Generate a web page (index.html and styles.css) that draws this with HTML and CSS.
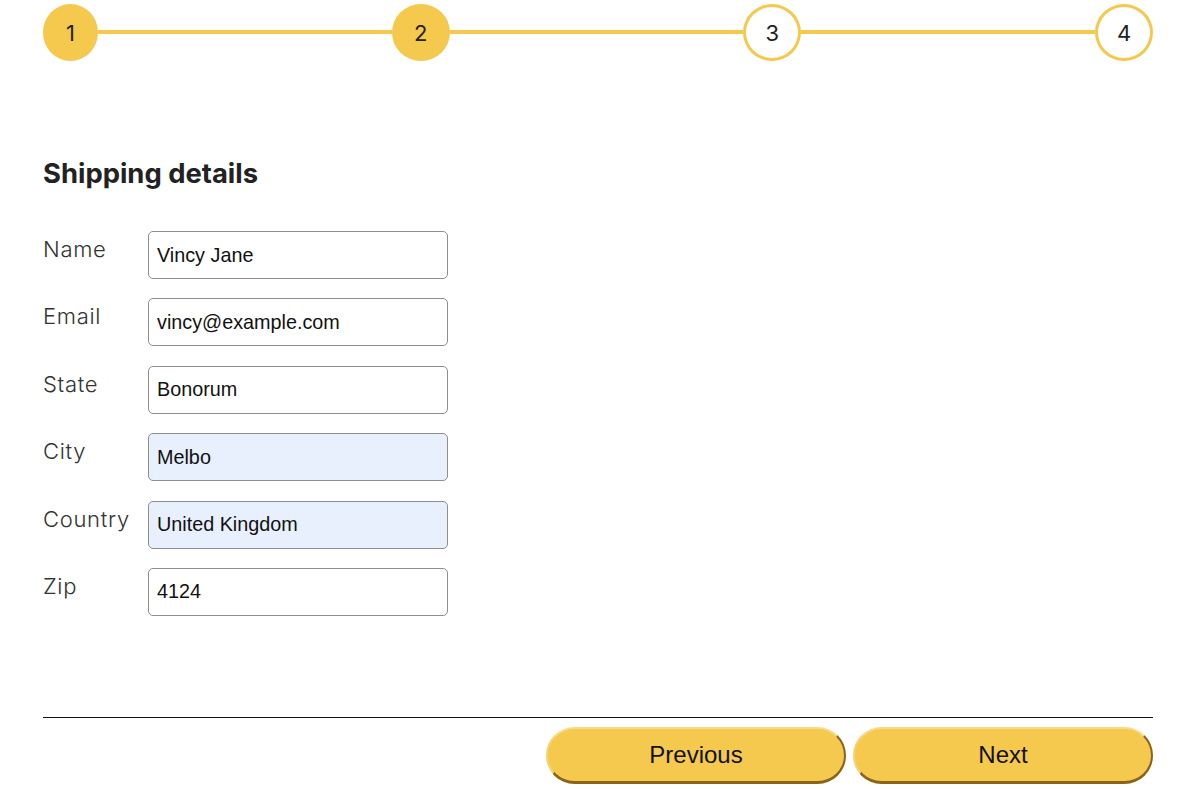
FILE: index.html
```html
<!DOCTYPE html>
<html lang="en">
<head>
<meta charset="utf-8">
<title>Shipping details</title>
<link rel="stylesheet" href="styles.css">
</head>
<body>
<div class="wizard">
  <div class="stepper">
    <div class="step step-done step-first">1</div>
    <div class="step-line"></div>
    <div class="step step-done">2</div>
    <div class="step-line"></div>
    <div class="step step-todo">3</div>
    <div class="step-line"></div>
    <div class="step step-todo">4</div>
  </div>

  <h2 class="title">Shipping details</h2>

  <form class="form">
    <div class="row">
      <label class="label" for="name">Name</label>
      <input class="field" id="name" type="text" value="Vincy Jane">
    </div>
    <div class="row">
      <label class="label" for="email">Email</label>
      <input class="field" id="email" type="text" value="vincy@example.com">
    </div>
    <div class="row">
      <label class="label" for="state">State</label>
      <input class="field" id="state" type="text" value="Bonorum">
    </div>
    <div class="row">
      <label class="label" for="city">City</label>
      <input class="field field-filled" id="city" type="text" value="Melbo">
    </div>
    <div class="row">
      <label class="label" for="country">Country</label>
      <input class="field field-filled" id="country" type="text" value="United Kingdom">
    </div>
    <div class="row">
      <label class="label" for="zip">Zip</label>
      <input class="field" id="zip" type="text" value="4124">
    </div>
  </form>

  <div class="footer">
    <button class="btn" type="button">Previous</button>
    <button class="btn" type="button">Next</button>
  </div>
</div>
</body>
</html>
```

FILE: styles.css
```css
html, body {
  margin: 0;
  padding: 0;
  background: #ffffff;
}

body {
  font-family: Inter, "Noto Sans", sans-serif;
  color: #222222;
}

.wizard {
  width: 1110px;
  padding: 4px 0 0 43px;
}

.stepper {
  display: flex;
  align-items: center;
}

.step {
  box-sizing: border-box;
  width: 58px;
  height: 57px;
  border-radius: 50%;
  display: flex;
  align-items: center;
  justify-content: center;
  font-size: 22px;
  color: #222222;
  flex: none;
}

.step-first {
  width: 55px;
}

.step-done {
  background: #f5c84e;
}

.step-todo {
  background: #ffffff;
  border: 3px solid #f5c84e;
}

.step-line {
  flex: 1;
  height: 4px;
  background: #f5c84e;
  margin-top: -2px;
}

.title {
  margin: 97px 0 0 0;
  font-size: 27.4px;
  font-weight: 700;
  line-height: 31px;
  color: #222222;
}

.form {
  margin-top: 42px;
  display: flex;
  flex-direction: column;
  gap: 19.4px;
}

.row {
  display: flex;
  align-items: flex-start;
}

.label {
  width: 105px;
  flex: none;
  margin-top: 5px;
  font-size: 22px;
  font-weight: 300;
  letter-spacing: 0.7px;
  line-height: 26px;
  color: #333333;
}

.field {
  box-sizing: border-box;
  width: 300px;
  height: 48px;
  margin: 0;
  padding: 0 8px;
  border: 1px solid #8e8e8e;
  border-radius: 5px;
  background: #ffffff;
  font-family: "Liberation Sans", Arial, sans-serif;
  font-size: 19.8px;
  color: #111111;
  outline: none;
}

.field-filled {
  background: #e8f0fe;
}

.footer {
  margin-top: 101px;
  border-top: 1px solid #111111;
  padding-top: 9px;
  display: flex;
  justify-content: flex-end;
  gap: 7px;
}

.btn {
  box-sizing: border-box;
  width: 300px;
  height: 57px;
  border-radius: 29px;
  border-width: 2px 2px 3px 2px;
  border-style: solid;
  border-top-color: #f9da86;
  border-left-color: #f7d174;
  border-bottom-color: #8a6518;
  border-right-color: #8a6518;
  background: #f5c84e;
  font-family: "Liberation Sans", Arial, sans-serif;
  font-size: 24px;
  color: #111111;
  padding: 1px 0 0 0;
  cursor: pointer;
}
```
